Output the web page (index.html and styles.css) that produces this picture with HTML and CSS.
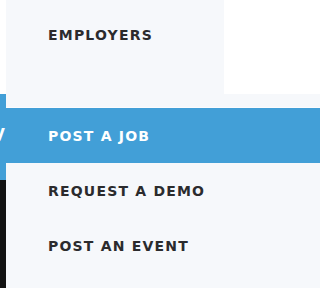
FILE: index.html
```html
<!DOCTYPE html>
<html>
<head>
<meta charset="utf-8">
<link rel="stylesheet" href="styles.css">
</head>
<body>
<div class="page">
  <div class="backdrop">
    <div class="bd-top"></div>
    <div class="bd-nav"><span class="bd-label">y</span></div>
    <div class="bd-body"></div>
  </div>
  <div class="menu">
    <div class="top-row">
      <a class="nav-item">EMPLOYERS</a>
      <div class="top-rest"></div>
    </div>
    <ul class="dropdown">
      <li class="dd-item active">POST A JOB</li>
      <li class="dd-item">REQUEST A DEMO</li>
      <li class="dd-item">POST AN EVENT</li>
    </ul>
  </div>
</div>
</body>
</html>
```

FILE: styles.css
```css
html, body {
  margin: 0;
  padding: 0;
  height: 100%;
  overflow: hidden;
  background: #ffffff;
}
.page {
  display: grid;
  grid-template-columns: 6px 1fr;
  height: 100vh;
  min-height: 288px;
  font-family: "DejaVu Sans", "Liberation Sans", sans-serif;
  font-weight: 700;
}
.backdrop {
  display: flex;
  flex-direction: column;
  overflow: hidden;
}
.bd-top {
  height: 94px;
  background: #ffffff;
}
.bd-nav {
  height: 86px;
  background: #429fd7;
  display: flex;
  justify-content: flex-end;
  padding-top: 30px;
  box-sizing: border-box;
}
.bd-label {
  color: #ffffff;
  font-size: 17px;
  line-height: 16px;
  margin-right: 1px;
  flex-shrink: 0;
}
.bd-body {
  flex: 1;
  background: #121212;
}
.menu {
  display: flex;
  flex-direction: column;
}
.top-row {
  display: flex;
  height: 94px;
}
.nav-item {
  width: 218px;
  background: #f6f8fb;
  color: #2b2b2d;
  font-size: 14px;
  letter-spacing: 1.2px;
  padding: 27px 0 0 42px;
  box-sizing: border-box;
}
.top-rest {
  flex: 1;
  background: #ffffff;
}
.dropdown {
  list-style: none;
  margin: 0;
  padding: 13px 0 0 0;
  flex: 1;
  background: #f6f8fb;
}
.dd-item {
  height: 55px;
  display: flex;
  align-items: center;
  padding-left: 42px;
  color: #2b2b2d;
  font-size: 14px;
  letter-spacing: 1.2px;
}
.dd-item.active {
  background: #429fd7;
  color: #ffffff;
  border-top: 1px solid #fbfcfe;
  box-sizing: border-box;
  height: 56px;
}
```
